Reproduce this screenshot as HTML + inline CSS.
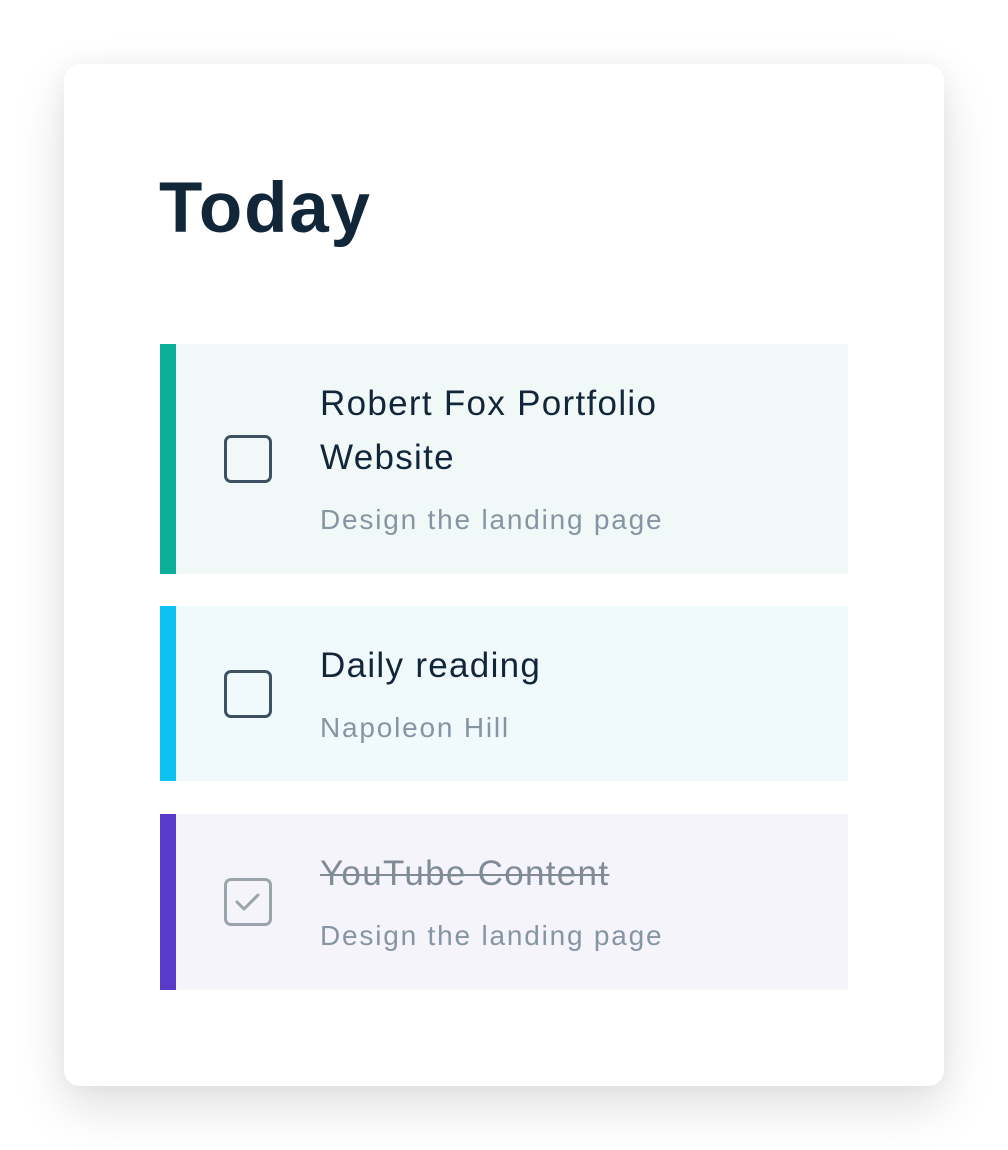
<!DOCTYPE html>
<html><head><style>
body{margin:0;width:1008px;height:1150px;background:#fff;font-family:"Liberation Sans",sans-serif;}
.card{position:absolute;left:64px;top:64px;width:880px;height:1022px;background:#fff;border-radius:16px;box-shadow:0 20px 50px rgba(0,0,0,0.13),0 0 20px rgba(0,0,0,0.04);}
h1{position:absolute;left:159px;top:169px;margin:0;font-size:71px;font-weight:900;color:#12263a;letter-spacing:1.8px;line-height:80px;}
.item{position:absolute;left:160px;width:688px;}
.bar{position:absolute;left:0;top:0;bottom:0;width:16px;}
.cb{position:absolute;left:64px;width:42px;height:42px;border:3px solid #3d5163;border-radius:7px;}
.t{position:absolute;left:160px;font-size:35px;color:#12263a;letter-spacing:1.3px;line-height:54px;white-space:nowrap;}
.s{position:absolute;left:160px;font-size:28px;color:#8595a3;letter-spacing:1.8px;white-space:nowrap;}
</style></head><body>
<div class="card"></div>
<h1>Today</h1>
<div class="item" style="top:344px;height:230px;background:#f0f9f8"><div class="bar" style="background:#0cae9a"></div>
<div class="cb" style="top:91px"></div>
<div class="t" style="top:33px">Robert Fox Portfolio<br>Website</div>
<div class="s" style="top:160px">Design the landing page</div></div>
<div class="item" style="top:606px;height:175px;background:#f0f9fc"><div class="bar" style="background:#0cc2f2"></div>
<div class="cb" style="top:64px"></div>
<div class="t" style="top:33px">Daily reading</div>
<div class="s" style="top:106px">Napoleon Hill</div></div>
<div class="item" style="top:814px;height:176px;background:#f4f4fa"><div class="bar" style="background:#5a3ac8"></div>
<div class="cb" style="top:64px;border-color:#9ba3ad"><svg width="42" height="42" viewBox="0 0 42 42" style="position:absolute;left:0;top:0"><path d="M10 21 L17 28 L31 14" fill="none" stroke="#9ba3ad" stroke-width="3" stroke-linecap="round" stroke-linejoin="round"/></svg></div>
<div class="t" style="top:33px;color:#7f8c98;text-decoration:line-through;text-decoration-thickness:2px">YouTube Content</div>
<div class="s" style="top:106px">Design the landing page</div></div>
</body></html>
